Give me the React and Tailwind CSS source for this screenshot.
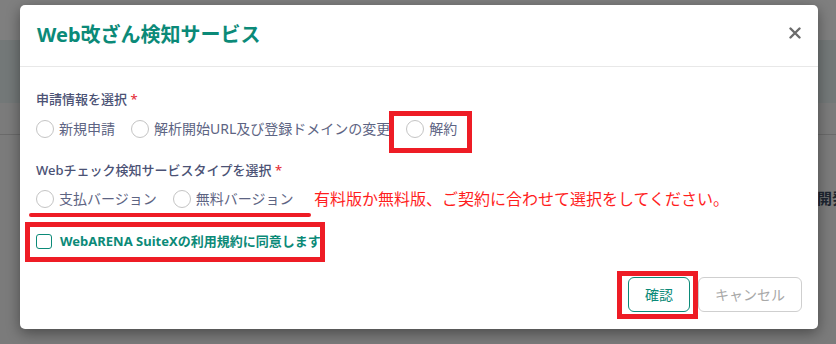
import React from "react";

const font = { fontFamily: '"Noto Sans", "Noto Sans CJK JP", sans-serif' };

const Radio = ({ label }) => (
  <label className="flex items-center gap-[5px] text-[14px] leading-[20px] text-[#5d6483]">
    <span className="w-[18px] h-[18px] rounded-full border border-[#c4c4c4] bg-white"></span>
    {label}
  </label>
);

const App = () => {
  return (
    <div className="relative w-[836px] h-[344px] overflow-hidden bg-[#7b7b7b]" style={font}>
      {/* page behind the overlay */}
      <div className="flex flex-col">
        <div className="h-[40px] bg-[#7f7f7f]"></div>
        <div className="h-[63px] bg-[#737878]"></div>
        <div className="h-[32px] bg-[#7b7b7b] border-b border-[#6a6a6a]"></div>
        <div className="h-[53px]"></div>
        <div className="pl-[817px] whitespace-nowrap text-[15px] font-bold leading-[20px] text-[#1c2530]">開発</div>
      </div>

      {/* modal */}
      <div className="absolute left-[20px] top-[5px] w-[798px] h-[324px] bg-white rounded-[5px] shadow-[0_4px_14px_rgba(0,0,0,0.4)] flex flex-col">
        <div className="h-[62px] flex items-center justify-between pl-[17px] pr-[17px] border-b border-[#e8e8e8]">
          <h2 className="text-[20px] font-bold text-[#0b8a78] leading-[24px] -mt-[2px]">Web改ざん検知サービス</h2>
          <svg width="12" height="12" viewBox="0 0 12 12" className="-mt-[5px]">
            <path d="M1.5 1.5 L10.5 10.5 M10.5 1.5 L1.5 10.5" stroke="#6b6b6b" strokeWidth="2.4" strokeLinecap="round" />
          </svg>
        </div>

        <div className="flex flex-col pl-[16px] pr-[16px] pt-[22px]">
          <div className="text-[13px] font-medium leading-[20px] text-[#4b5275]">
            申請情報を選択 <span className="text-[#e5323c]">*</span>
          </div>
          <div className="mt-[10px] flex items-center gap-[16px]">
            <Radio label="新規申請" />
            <Radio label="解析開始URL及び登録ドメインの変更" />
            <Radio label="解約" />
          </div>

          <div className="mt-[21px] text-[13px] font-medium leading-[20px] text-[#4b5275]">
            Webチェック検知サービスタイプを選択 <span className="text-[#e5323c]">*</span>
          </div>
          <div className="mt-[9px] flex items-center gap-[16px]">
            <Radio label="支払バージョン" />
            <Radio label="無料バージョン" />
          </div>

          <label className="mt-[22px] flex items-center gap-[8px] h-[20px]">
            <span className="w-[16px] h-[15px] rounded-[3px] border-[1.5px] border-[#0b8a78] bg-white"></span>
            <span className="text-[13px] font-bold text-[#0b8a78] leading-[20px]">WebARENA SuiteXの利用規約に同意します</span>
          </label>

          <div className="mt-[26px] flex justify-end gap-[8px]">
            <button className="h-[35px] px-[16px] rounded-[6px] border border-[#0b8a78] text-[14px] text-[#0b8a78] bg-white">確認</button>
            <button className="h-[35px] px-[16px] rounded-[6px] border border-[#cfcfcf] text-[14px] text-[#a8a8a8] bg-white">キャンセル</button>
          </div>
        </div>
      </div>

      {/* red annotations */}
      <div className="absolute left-[389px] top-[111px] w-[83px] h-[42px] border-[5px] border-[#ee1c25]"></div>
      <div className="absolute left-[29px] top-[213px] w-[282px] h-[4px] rounded-full bg-[#ee1c25]"></div>
      <div className="absolute left-[314px] top-[188px] text-[16px] leading-[22px] text-[#ff1e1e] whitespace-nowrap">
        有料版か無料版、ご契約に合わせて選択をしてください。
      </div>
      <div className="absolute left-[25px] top-[222px] w-[300px] h-[40px] border-[5px] border-[#ee1c25]"></div>
      <div className="absolute left-[617px] top-[271px] w-[81px] h-[48px] border-[5px] border-[#ee1c25]"></div>
    </div>
  );
};

export default App;
